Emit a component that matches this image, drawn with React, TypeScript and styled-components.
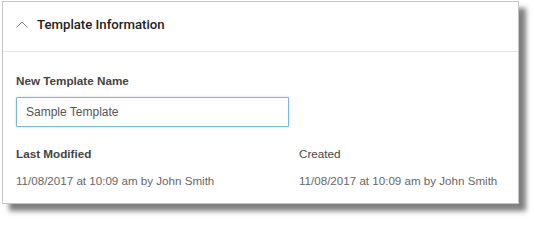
import styled, { createGlobalStyle } from "styled-components"

const GlobalStyle = createGlobalStyle`
	body {
		margin: 0;
		padding: 1px 0 0 2px;
		min-height: 220px;
		box-sizing: border-box;
		background: #fff;
		font-family: "Liberation Sans", Arial, sans-serif;
	}
`

const Card = styled.section`
	width: 517px;
	height: 203px;
	box-sizing: border-box;
	border: 1px solid #c4c4c4;
	background: #fff;
	box-shadow: 7px 7px 5px rgba(0, 0, 0, 0.5);
`

const Header = styled.header`
	height: 50px;
	box-sizing: border-box;
	display: flex;
	align-items: flex-start;
	gap: 9px;
	padding: 15px 13px 0;
	border-bottom: 1px solid #e2e2e2;
`

const Chevron = styled.svg`
	margin-top: 3px;
	flex: none;
`

const Title = styled.h2`
	margin: 0;
	font-family: Roboto, "Liberation Sans", sans-serif;
	font-size: 13.2px;
	line-height: 16px;
	font-weight: 500;
	color: #222;
`

const Body = styled.div`
	padding: 22px 13px 0;
`

const Label = styled.div<{ $bold?: boolean }>`
	font-size: 11.7px;
	font-weight: ${(p) => (p.$bold ? 700 : 400)};
	color: #444;
	line-height: 14px;
`

const NameInput = styled.input`
	display: block;
	margin-top: 9px;
	width: 273px;
	height: 30px;
	box-sizing: border-box;
	padding: 0 9px;
	border: 1px solid #7fb7d8;
	border-radius: 1px;
	box-shadow: 0 0 2px rgba(90, 170, 220, 0.5);
	font-family: inherit;
	font-size: 12px;
	color: #555;
	outline: none;
`

const MetaGrid = styled.div`
	display: grid;
	grid-template-columns: 283px 1fr;
	margin-top: 20px;
`

const Value = styled.div`
	margin-top: 13px;
	font-size: 11.6px;
	line-height: 14px;
	color: #666;
	white-space: nowrap;
`

function ChevronUp() {
	return (
		<Chevron width="12" height="8" viewBox="0 0 12 8">
			<path d="M0.5 7.5 L6 2 L11.5 7.5" fill="none" stroke="#777" strokeWidth="1" />
		</Chevron>
	)
}

export default function App() {
	return (
		<>
			<GlobalStyle />
			<Card>
				<Header>
					<ChevronUp />
					<Title>Template Information</Title>
				</Header>
				<Body>
					<Label $bold>New Template Name</Label>
					<NameInput defaultValue="Sample Template" autoFocus />
					<MetaGrid>
						<div>
							<Label $bold>Last Modified</Label>
							<Value>11/08/2017 at 10:09 am by John Smith</Value>
						</div>
						<div>
							<Label>Created</Label>
							<Value>11/08/2017 at 10:09 am by John Smith</Value>
						</div>
					</MetaGrid>
				</Body>
			</Card>
		</>
	)
}
